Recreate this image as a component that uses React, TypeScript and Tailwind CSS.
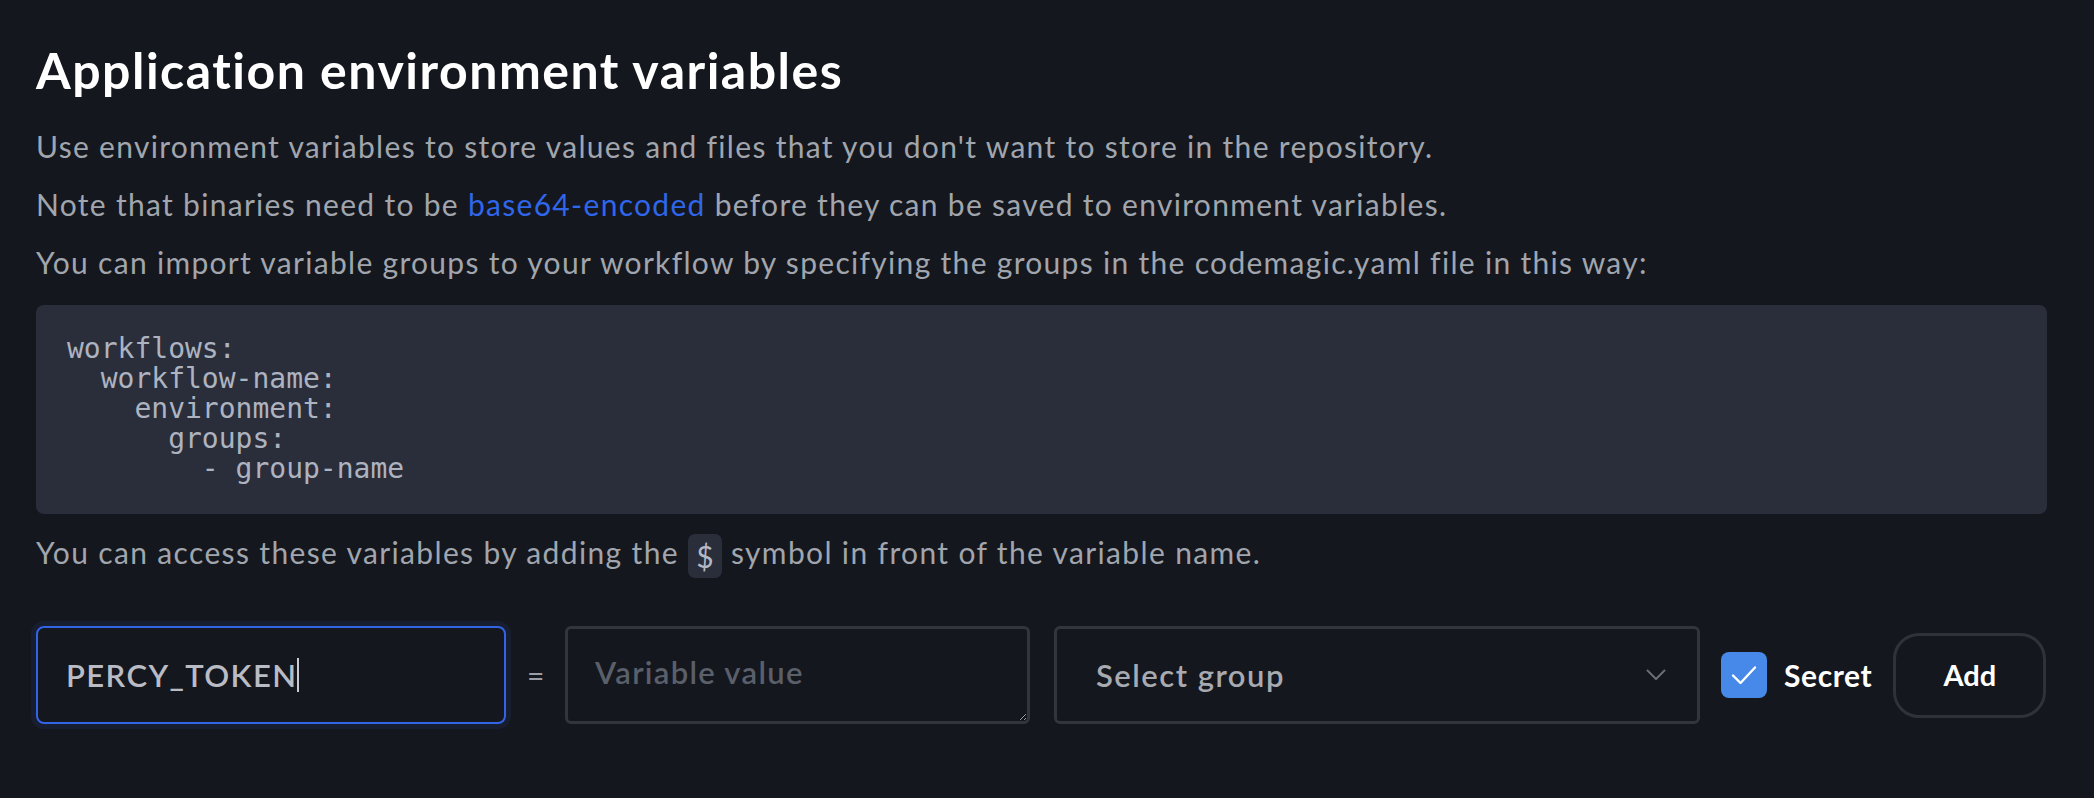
const code = `workflows:
  workflow-name:
    environment:
      groups:
        - group-name`;

export default function App() {
  return (
    <div
      className="min-h-[798px] bg-[#14171d] pl-[36px] pr-[47px] pt-[40px] text-[#a1a5ad]"
      style={{ fontFamily: "Lato, 'Open Sans', sans-serif" }}
    >
      <h1 className="text-[50px] font-bold leading-[60px] tracking-[1.5px] text-white">
        Application environment variables
      </h1>

      <div className="mt-[17px] text-[30px] leading-[58px] tracking-[1.3px]">
        <p>Use environment variables to store values and files that you don't want to store in the repository.</p>
        <p>
          Note that binaries need to be{" "}
          <a href="#" className="text-[#2f66ea]">
            base64-encoded
          </a>{" "}
          before they can be saved to environment variables.
        </p>
        <p>You can import variable groups to your workflow by specifying the groups in the codemagic.yaml file in this way:</p>
      </div>

      <pre
        className="mt-[14px] rounded-[8px] bg-[#2a2e3b] pt-[29px] pb-[30px] pl-[31px] text-[28px] leading-[30px] text-[#aeb3c0]"
        style={{ fontFamily: "'DejaVu Sans Mono', monospace" }}
      >
        {code}
      </pre>

      <p className="mt-[9px] text-[30px] leading-[58px] tracking-[1.35px]">
        You can access these variables by adding the{" "}
        <span className="inline-flex h-[44px] w-[34px] items-center justify-center rounded-[7px] bg-[#2a2e3b] align-middle tracking-normal text-[#b3b8c5]">
          $
        </span>{" "}
        symbol in front of the variable name.
      </p>

      <div className="mt-[45px] flex items-center">
        <div
          role="textbox"
          className="flex h-[98px] w-[470px] items-center rounded-[8px] border-2 border-[#3464e6] pl-[28px] text-[31px] font-semibold tracking-[1.4px] text-[#b9bcc4] shadow-[0_0_0_5px_rgba(37,64,140,0.18)]"
        >
          PERCY_TOKEN
          <span className="inline-block h-[34px] w-[2px] bg-[#c9ccd2]" />
        </div>

        <span className="ml-[21px] w-[15px] text-center text-[30px] text-[#9a9ea6]">=</span>

        <textarea
          placeholder="Variable value"
          className="ml-[23px] h-[98px] w-[465px] rounded-[6px] border-[3px] border-[#32353d] bg-transparent pt-[25px] pl-[27px] text-[31px] leading-[36px] font-semibold tracking-[1.3px] text-[#b9bcc4] outline-none [color-scheme:dark] placeholder:text-[#5a5f6a]"
        />

        <div className="ml-[24px] flex h-[98px] w-[646px] items-center justify-between rounded-[6px] border-[3px] border-[#32353d] pl-[39px] pr-[31px]">
          <span className="text-[31px] font-semibold tracking-[1.5px] text-[#a7aab1]">Select group</span>
          <svg width="20" height="12" viewBox="0 0 20 12" fill="none">
            <path d="M1.5 1.5 L10 10 L18.5 1.5" stroke="#6a6e77" strokeWidth="2" strokeLinecap="round" strokeLinejoin="round" />
          </svg>
        </div>

        <label className="ml-[21px] flex items-center">
          <span className="flex h-[46px] w-[46px] items-center justify-center rounded-[8px] bg-[#4689e8]">
            <svg width="26" height="20" viewBox="0 0 26 20" fill="none">
              <path d="M2 10.5 L9.5 18 L24 2.5" stroke="#ffffff" strokeWidth="2.4" strokeLinecap="round" strokeLinejoin="round" />
            </svg>
          </span>
          <span className="ml-[17px] text-[30px] font-bold tracking-[0.6px] text-white">Secret</span>
        </label>

        <button className="ml-[21px] h-[85px] w-[153px] rounded-[26px] border-[3px] border-[#2e323b] text-[29px] font-bold text-white">
          Add
        </button>
      </div>
    </div>
  );
}
